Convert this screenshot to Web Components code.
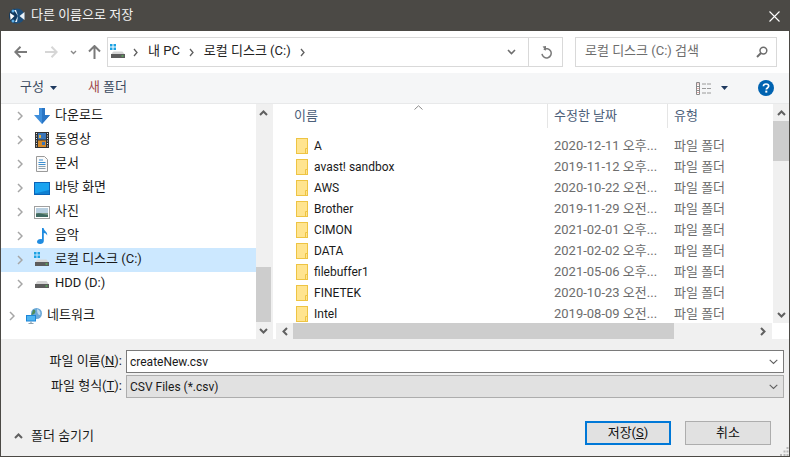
<!DOCTYPE html>
<html lang="ko"><head><meta charset="utf-8"><title>다른 이름으로 저장</title>
<style>
html,body{margin:0;padding:0;background:#f0f0f0}
body{font:13px/16px Roboto,"Noto Sans CJK KR",sans-serif;color:#1a1a1a;width:790px;height:457px;overflow:hidden}
</style></head><body>
<save-dialog>
  <title-bar>다른 이름으로 저장</title-bar>
  <nav-bar></nav-bar>
  <tool-bar></tool-bar>
  <main-area>
    <tree-pane slot="tree">
      <tree-item icon="download">다운로드</tree-item>
      <tree-item icon="video">동영상</tree-item>
      <tree-item icon="doc">문서</tree-item>
      <tree-item icon="desktop">바탕 화면</tree-item>
      <tree-item icon="photo">사진</tree-item>
      <tree-item icon="music">음악</tree-item>
      <tree-item icon="winDrive" selected>로컬 디스크 (C:)</tree-item>
      <tree-item icon="drive">HDD (D:)</tree-item>
      <tree-item icon="network" top>네트워크</tree-item>
    </tree-pane>
    <file-pane slot="files">
      <file-row date="2020-12-11" ap="오후...">A</file-row>
      <file-row date="2019-11-12" ap="오후...">avast! sandbox</file-row>
      <file-row date="2020-10-22" ap="오전...">AWS</file-row>
      <file-row date="2019-11-29" ap="오전...">Brother</file-row>
      <file-row date="2021-02-01" ap="오후...">CIMON</file-row>
      <file-row date="2021-02-02" ap="오후...">DATA</file-row>
      <file-row date="2021-05-06" ap="오후...">filebuffer1</file-row>
      <file-row date="2020-10-23" ap="오전...">FINETEK</file-row>
      <file-row date="2019-08-09" ap="오전...">Intel</file-row>
    </file-pane>
  </main-area>
  <bottom-area></bottom-area>
</save-dialog>
<script>
const ICONS={
back:'<svg width="14" height="12" viewBox="0 0 14 12"><path d="M6.5 .8 1.3 6l5.2 5.2M1.5 6H13" fill="none" stroke="#7a7a7a" stroke-width="2"/></svg>',
forward:'<svg width="14" height="12" viewBox="0 0 14 12"><path d="M7.5 .8 12.7 6l-5.2 5.2M12.5 6H1" fill="none" stroke="#d6d6d6" stroke-width="2"/></svg>',
up:'<svg width="13" height="14" viewBox="0 0 13 14"><path d="M1 6.5 6.5 1 12 6.5M6.5 1.5V14" fill="none" stroke="#7a7a7a" stroke-width="2"/></svg>',
chevDown:'<svg width="9" height="6" viewBox="0 0 9 6"><path d="M1 1 4.5 4.5 8 1" fill="none" stroke="#6f6f6f" stroke-width="1.6"/></svg>',
chevSmall:'<svg width="7" height="5" viewBox="0 0 7 5"><path d="M1 1 3.5 3.5 6 1" fill="none" stroke="#8a8a8a" stroke-width="1.4"/></svg>',
chevRight:'<svg width="5" height="9" viewBox="0 0 5 9"><path d="M1 1 4 4.5 1 8" fill="none" stroke="#5f5f5f" stroke-width="1.3"/></svg>',
treeChev:'<svg width="6" height="10" viewBox="0 0 6 10"><path d="M1 1 5 5 1 9" fill="none" stroke="#a6a6a6" stroke-width="1.5"/></svg>',
refresh:'<svg width="12" height="13" viewBox="0 0 12 13"><path d="M3.2 2.8A4.6 4.6 0 1 1 1.4 7" fill="none" stroke="#7a7a7a" stroke-width="1.5" transform="translate(.6 .8)"/><path d="M2.6 .6 6 0 6 5z" fill="#7a7a7a"/></svg>',
search:'<svg width="12" height="12" viewBox="0 0 12 12"><circle cx="7.4" cy="4.6" r="3.4" fill="none" stroke="#6d6d6d" stroke-width="1.5"/><path d="M5 7 1 11" stroke="#6d6d6d" stroke-width="2"/></svg>',
caret:'<svg width="7" height="4" viewBox="0 0 7 4"><path d="M0 0H7L3.5 4z" fill="#1e3a5f"/></svg>',
views:'<svg width="16" height="13" viewBox="0 0 16 13"><path d="M.5.5h3v12h-3zM.5 4.5h3M.5 8.5h3" fill="#fff" stroke="#8a8a8a"/><path d="M6 2h4M11 2h4M6 6.500h4M11 6.500h4M6 11h4M11 11h4" stroke="#9a9a9a"/><path d="M1.500 2h1M1.500 6.500h1M1.500 10.500h1" stroke="#c05050"/></svg>',
help:'<svg width="16" height="16" viewBox="0 0 16 16"><circle cx="8" cy="8" r="8" fill="#0063b1"/><path d="M5.400 6.200C5.500 4.700 6.500 4 8 4c1.600 0 2.700.8 2.700 2.100 0 1.900-2.400 1.900-2.400 3.500" fill="none" stroke="#fff" stroke-width="1.700"/><rect x="7.300" y="10.600" width="2" height="2" fill="#fff"/></svg>',
app:'<svg width="16" height="16" viewBox="0 0 16 16"><circle cx="8" cy="8" r="7.500" fill="#1d4f7c"/><path d="M0 8a8 8 0 0 1 5-7.400L8 8 5 15.400A8 8 0 0 1 0 8z" fill="#12395e"/><path d="M1 5 5.500 8 1.500 12z" fill="#fff"/><path d="M15.500 4 10.500 8l5 4zM9 8 5 2l2 0zM9 8l-3 6h2z" fill="#e9f3fb"/><circle cx="4" cy="3" r="1.500" fill="#5fb0e8"/><circle cx="4" cy="13" r="1.500" fill="#5fb0e8"/></svg>',
winDrive:'<svg width="16" height="16" viewBox="0 0 16 16"><path d="M0 0h2.500v2.500H0zM3.500 0H6v2.500H3.500zM0 3.500h2.500V6H0zM3.500 3.500H6V6H3.500z" fill="#1ba1e2"/><path d="M2 9 3.500 7.500h9L14.500 10H1.500z" fill="#d5d5d5"/><rect x="1" y="10" width="14" height="4" fill="#5c5c5c"/><rect x="11.500" y="11.500" width="2" height="1" fill="#58d858"/></svg>',
drive:'<svg width="16" height="16" viewBox="0 0 16 16"><path d="M2 7 3.500 5h9L14.500 8H1.500z" fill="#d5d5d5"/><rect x="1" y="8" width="14" height="4" fill="#5c5c5c"/><rect x="11.500" y="9.500" width="2" height="1" fill="#58d858"/></svg>',
download:'<svg width="16" height="16" viewBox="0 0 16 16"><path d="M5 0h6v7h5l-8 9-8-9h5z" fill="#3f8fdc"/><path d="M8 0h3v7h5l-8 9z" fill="#2a76c6"/></svg>',
video:'<svg width="16" height="16" viewBox="0 0 16 16"><rect x="1" y="0" width="14" height="16" fill="#333"/><rect x="4" y="1" width="8" height="6.500" fill="#3b75b8"/><rect x="4" y="8.500" width="8" height="6.500" fill="#d68a2a"/><rect x="5" y="3" width="2" height="3" fill="#e7b23a"/><rect x="8" y="10" width="3" height="3" fill="#3b75b8"/><path d="M2 1.500h1M2 4h1M2 6.500h1M2 9h1M2 11.500h1M2 14h1M13 1.500h1M13 4h1M13 6.500h1M13 9h1M13 11.500h1M13 14h1" stroke="#e8e8e8" stroke-width="1.200"/></svg>',
doc:'<svg width="16" height="16" viewBox="0 0 16 16"><path d="M2.500.5h8l3 3v12h-11z" fill="#fafafa" stroke="#9a9a9a"/><path d="M5 4h4M4.500 6.500h7M4.500 8.500h7" stroke="#3c8fd0"/><path d="M4.500 10.500h7M4.500 12.500h7" stroke="#8aa0b0"/></svg>',
desktop:'<svg width="16" height="13" viewBox="0 0 16 13"><rect width="16" height="13" fill="#0a63b8"/><rect x="1" y="1" width="14" height="10.500" fill="#1aa3f0"/><path d="M1 11.500 15 8v3.500z" fill="#0f7fd0"/></svg>',
photo:'<svg width="16" height="13" viewBox="0 0 16 13"><rect x=".5" y=".5" width="15" height="12" fill="#fff" stroke="#a0a0a0"/><rect x="2" y="2" width="12" height="5" fill="#b8cfe0"/><path d="M2 7h12v4H2z" fill="#7f9a8a"/><path d="M2 8c3-2 6 0 12 1v2H2z" fill="#3f6a62"/></svg>',
music:'<svg width="14" height="16" viewBox="0 0 14 16"><path d="M7 0h1.600c.4 3 4 3.500 3.600 7.500C11.500 5.800 10 5 8.800 5v8c0 1.900-1.700 3-3.700 3C3.400 16 2 15 2 13.700c0-1.500 1.700-2.700 3.500-2.700.6 0 1.100.1 1.500.3z" fill="#1f8be0"/></svg>',
network:'<svg width="16" height="16" viewBox="0 0 16 16"><circle cx="10.500" cy="5.500" r="5.500" fill="#6aa8d8"/><path d="M7 2c2-1 3 1 2 3s-3 1-4 3" fill="#4f8c5c"/><path d="M11 1c3 1 4 4 3 6-2 0-3-2-3-6" fill="#bcd9ee"/><rect x="0" y="7" width="10" height="6.500" fill="#1c86d8"/><rect x="1" y="8" width="8" height="4.500" fill="#4fb4f0"/><path d="M5 13.500V15.500M2.500 15.500h5" stroke="#8aa0b0" stroke-width="1.200"/></svg>',
folder:'<svg width="12" height="16" viewBox="0 0 12 16"><rect x=".5" y=".5" width="11" height="15" fill="#ffe48f" stroke="#eec443"/><path d="M9.500 15V10.500h2" fill="none" stroke="#eec443"/></svg>',
sbUp:'<svg width="9" height="6" viewBox="0 0 9 6"><path d="M1 5 4.500 1.500 8 5" fill="none" stroke="#606060" stroke-width="2"/></svg>',
sbDown:'<svg width="9" height="6" viewBox="0 0 9 6"><path d="M1 1 4.500 4.500 8 1" fill="none" stroke="#606060" stroke-width="2"/></svg>',
sbLeft:'<svg width="6" height="9" viewBox="0 0 6 9"><path d="M5 1 1.500 4.500 5 8" fill="none" stroke="#606060" stroke-width="2"/></svg>',
sbRight:'<svg width="6" height="9" viewBox="0 0 6 9"><path d="M1 1 4.500 4.500 1 8" fill="none" stroke="#606060" stroke-width="2"/></svg>',
sortUp:'<svg width="9" height="5" viewBox="0 0 9 5"><path d="M.5 4.500 4.500 .8l4 3.700" fill="none" stroke="#8a8a8a"/></svg>',
close:'<svg width="11" height="11" viewBox="0 0 11 11"><path d="M.5.500l10 10M10.500.500l-10 10" stroke="#fff" stroke-width="1.100"/></svg>',
chevDownThin:'<svg width="9" height="6" viewBox="0 0 9 6"><path d="M.7.8 4.500 4.500 8.300.8" fill="none" stroke="#606060" stroke-width="1.100"/></svg>',
grip:'<svg width="9" height="9" viewBox="0 0 9 9"><path d="M6.500 0h2v2h-2zM3.500 3.500h2v2h-2zM6.500 3.500h2v2h-2zM0 7h2v2H0zM3.500 7h2v2h-2zM6.500 7h2v2h-2z" fill="#b8b8b8"/></svg>'
};
function def(name,html,init){
  customElements.define(name,class extends HTMLElement{
    constructor(){super();this.attachShadow({mode:'open'});}
    connectedCallback(){ if(!this.shadowRoot.firstChild) this.shadowRoot.innerHTML=typeof html==='function'?html(this):html; if(init) init(this); }
  });
}
def('x-icon','<style>:host{display:inline-flex;align-items:center;justify-content:center;flex:none;line-height:0}</style><span id="i" style="display:contents"></span>',
  el=>{el.shadowRoot.getElementById('i').innerHTML=ICONS[el.getAttribute('name')]||'';});

def('save-dialog',`<style>:host{display:flex;flex-direction:column;width:790px;height:457px;box-sizing:border-box;border:1px solid #4b4945;background:#f0f0f0}</style><slot></slot>`);

def('title-bar',`<style>
:host{display:flex;align-items:center;height:30px;flex:none;background:#4b4945;color:#fff;padding:0 5px 0 9px;margin:0 -1px 0 -1px;box-sizing:border-box}
.t{flex:1;margin-left:6px;color:#f2f2f2;padding-bottom:2px}
x-icon.c{margin-right:5px}
</style><x-icon name="app"></x-icon><span class="t"><slot></slot></span><x-icon class="c" name="close"></x-icon>`);

def('nav-bar',`<style>
:host{display:flex;align-items:center;height:42px;flex:none;background:#fff;padding:0 12px 0 13px;box-sizing:border-box}
.ic{display:flex;align-items:center;width:93px;flex:none}
.ic x-icon:nth-child(1){margin-right:16px}
.ic x-icon:nth-child(2){margin-right:12px}
.ic x-icon:nth-child(3){margin-right:11px}
.addr{display:flex;align-items:center;flex:none;width:456px;height:30px;box-sizing:border-box;border:1px solid #d9d9d9;padding-left:2px}
.addr .crumbs{display:flex;align-items:center;flex:1;height:100%}
.addr .drv{margin-right:7px}
.crumb{margin:0 9px 0 10px;white-space:nowrap;color:#222;padding-bottom:2px}
.btn{display:flex;align-items:center;justify-content:center;height:100%;flex:none}
.dd{width:33px}
.rf{width:33px;border-left:1px solid #d9d9d9}
.search{display:flex;align-items:center;flex:none;width:202px;height:30px;margin-left:12px;box-sizing:border-box;border:1px solid #d9d9d9;padding:0 8px 0 9px;color:#6d6d6d}
.search span{flex:1;padding-bottom:2px}
</style>
<div class="ic"><x-icon name="back"></x-icon><x-icon name="forward"></x-icon><x-icon name="chevSmall"></x-icon><x-icon name="up"></x-icon></div>
<div class="addr"><div class="crumbs"><x-icon class="drv" name="winDrive"></x-icon><x-icon name="chevRight"></x-icon><span class="crumb">내 PC</span><x-icon name="chevRight"></x-icon><span class="crumb">로컬 디스크 (C:)</span><x-icon name="chevRight"></x-icon></div>
<div class="btn dd"><x-icon name="chevDown"></x-icon></div><div class="btn rf"><x-icon name="refresh"></x-icon></div></div>
<div class="search"><span>로컬 디스크 (C:) 검색</span><x-icon name="search"></x-icon></div>`);

def('tool-bar',`<style>
:host{display:flex;align-items:center;height:31px;flex:none;background:#f5f6f7;border-bottom:1px solid #e8e9ea;box-sizing:border-box;padding:0 15px 0 19px;color:#3b4a60}
span.txt{padding-bottom:2px}
.caret1{margin-left:6px}
.new{margin-left:31px}
.new b{font-weight:400;color:#a0484a}
.sp{flex:1}
.caret2{margin-left:9px;margin-right:30px}
</style><span class="txt">구성</span><x-icon class="caret1" name="caret"></x-icon><span class="txt new"><b>새</b> 폴더</span><span class="sp"></span><x-icon name="views"></x-icon><x-icon class="caret2" name="caret"></x-icon><x-icon name="help"></x-icon>`);

def('main-area',`<style>
:host{display:flex;height:235px;flex:none;background:#fff}
.split{width:2px;flex:none;background:#f0f0f0}
</style><slot name="tree"></slot><div class="split"></div><slot name="files"></slot>`);

def('v-scroll',el=>`<style>
:host{display:flex;flex-direction:column;flex:none;background:#f0f0f0;height:100%}
.b{height:17px;flex:none;display:flex;align-items:center;justify-content:center}
.t{flex:1;display:flex;flex-direction:column;min-height:0}
.th{background:#cdcdcd;flex:none;height:${el.getAttribute('size')||0}px;margin-top:${el.getAttribute('start')||0}px}
</style><div class="b"><x-icon name="sbUp"></x-icon></div><div class="t"><div class="th"></div></div><div class="b"><x-icon name="sbDown"></x-icon></div>`);

def('tree-pane',`<style>
:host{display:flex;width:270px;flex:none;height:100%;overflow:hidden}
.list{flex:1;min-width:0;display:flex;flex-direction:column}
v-scroll{width:15px}
</style><div class="list"><slot></slot></div><v-scroll start="146" size="55"></v-scroll>`);

def('tree-item',el=>`<style>
:host{display:flex;align-items:center;height:24px;flex:none;box-sizing:border-box;padding-left:16px;color:#1a1a1a;white-space:nowrap}
:host([selected]){background:#cce8ff}
:host([top]){margin-top:8px;padding-left:8px}
.chev{margin-right:10px}
.ic{width:17px;margin-right:5px;display:flex;justify-content:center}
.l{padding-bottom:2px}
</style><x-icon class="chev" name="treeChev"></x-icon><span class="ic"><x-icon name="${el.getAttribute('icon')}"></x-icon></span><span class="l"><slot></slot></span>`);

def('file-pane',`<style>
:host{display:flex;flex:1;min-width:0;flex-direction:column;height:100%;overflow:hidden}
.top{display:flex;height:219px;flex:none}
.body{flex:1;min-width:0;display:flex;flex-direction:column;position:relative;overflow:hidden}
.head{display:flex;height:24px;flex:none;color:#4c607a;padding-left:21px}
.head .c{display:flex;align-items:center;box-sizing:border-box;height:100%}
.c1{width:253px}
.c2{width:120px;border-left:1px solid #e5e5e5;padding-left:6px}
.c3{border-left:1px solid #e5e5e5;padding-left:6px}
.sort{position:absolute;left:141px;top:1px}
.rows{flex:1;min-height:0;padding-top:7px;overflow:hidden}
v-scroll{width:16px}
.h{display:flex;height:16px;flex:none;align-items:stretch;padding-left:3px}
.hb{width:17px;display:flex;align-items:center;justify-content:center;background:#f0f0f0;flex:none}
.track{display:flex;background:#f0f0f0;width:479px;flex:none;align-items:stretch}
.thumb{width:381px;background:#cdcdcd;flex:none}
.sp{flex:1;display:flex;align-items:center;justify-content:flex-end;padding-right:6px}
</style>
<div class="top"><div class="body"><div class="head"><div class="c c1">이름</div><div class="c c2">수정한 날짜</div><div class="c c3">유형</div></div><x-icon class="sort" name="sortUp"></x-icon><div class="rows"><slot></slot></div></div><v-scroll start="0" size="40"></v-scroll></div>
<div class="h"><div class="hb"><x-icon name="sbLeft"></x-icon></div><div class="track"><div class="thumb"></div><div class="sp"><x-icon name="sbRight"></x-icon></div></div></div>`);

def('file-row',el=>`<style>
:host{display:flex;align-items:center;height:21px;box-sizing:border-box;padding-left:23px;white-space:nowrap;color:#1a1a1a}
x-icon{margin-right:6px}
.n{width:240px;flex:none;font-size:12px}
.d{width:120px;flex:none;color:#6d6d6d}
.ty{color:#6d6d6d}
</style><x-icon name="folder"></x-icon><span class="n"><slot></slot></span><span class="d">${el.getAttribute('date')} ${el.getAttribute('ap')}</span><span class="ty">파일 폴더</span>`);

def('form-row',el=>`<style>
:host{display:flex;align-items:center;height:23px;flex:none}
.l{width:120px;flex:none;text-align:right;padding:0 4px 2px 0;box-sizing:border-box;color:#1a1a1a;white-space:nowrap}
u{text-decoration:underline}
.f{display:flex;align-items:center;flex:none;width:658px;height:23px;box-sizing:border-box;padding:0 5px 0 3px;background:#fff;border:1px solid #7a7a7a;color:#1a1a1a;font-size:12px}
:host([combo]) .f{background:#e1e1e1;border-color:#adadad}
.f span{flex:1}
</style><div class="l">${el.getAttribute('label')}(<u>${el.getAttribute('key')}</u>):</div><div class="f"><span><slot></slot></span><x-icon name="chevDownThin"></x-icon></div>`);

def('dlg-button',`<style>
:host{display:flex;align-items:center;justify-content:center;width:86px;height:24px;box-sizing:border-box;flex:none;background:#e1e1e1;border:1px solid #adadad;color:#111;padding-bottom:1px}
:host([primary]){border:2px solid #0078d7}
</style><slot></slot>`);

def('bottom-area',`<style>
:host{display:flex;flex-direction:column;flex:1;min-height:0;background:#f0f0f0;padding:11px 0 0 5px;box-sizing:border-box;position:relative}
.rows{display:flex;flex-direction:column;gap:2px}
.foot{display:flex;align-items:center;margin-top:23px;height:24px}
.hide{display:flex;align-items:center;margin-left:8px;color:#1a1a1a;gap:8px;margin-top:6px;width:571px}
.btns{display:flex;gap:14px;}
.grip{position:absolute;right:0;bottom:0}
u{text-decoration:underline}
</style>
<div class="rows"><form-row label="파일 이름" key="N">createNew.csv</form-row><form-row combo label="파일 형식" key="T">CSV Files (*.csv)</form-row></div>
<div class="foot"><div class="hide"><x-icon name="sbUp"></x-icon><span>폴더 숨기기</span></div><div class="btns"><dlg-button primary>저장(<u>S</u>)</dlg-button><dlg-button>취소</dlg-button></div></div>
<x-icon class="grip" name="grip"></x-icon>`);
</script>
</body></html>
